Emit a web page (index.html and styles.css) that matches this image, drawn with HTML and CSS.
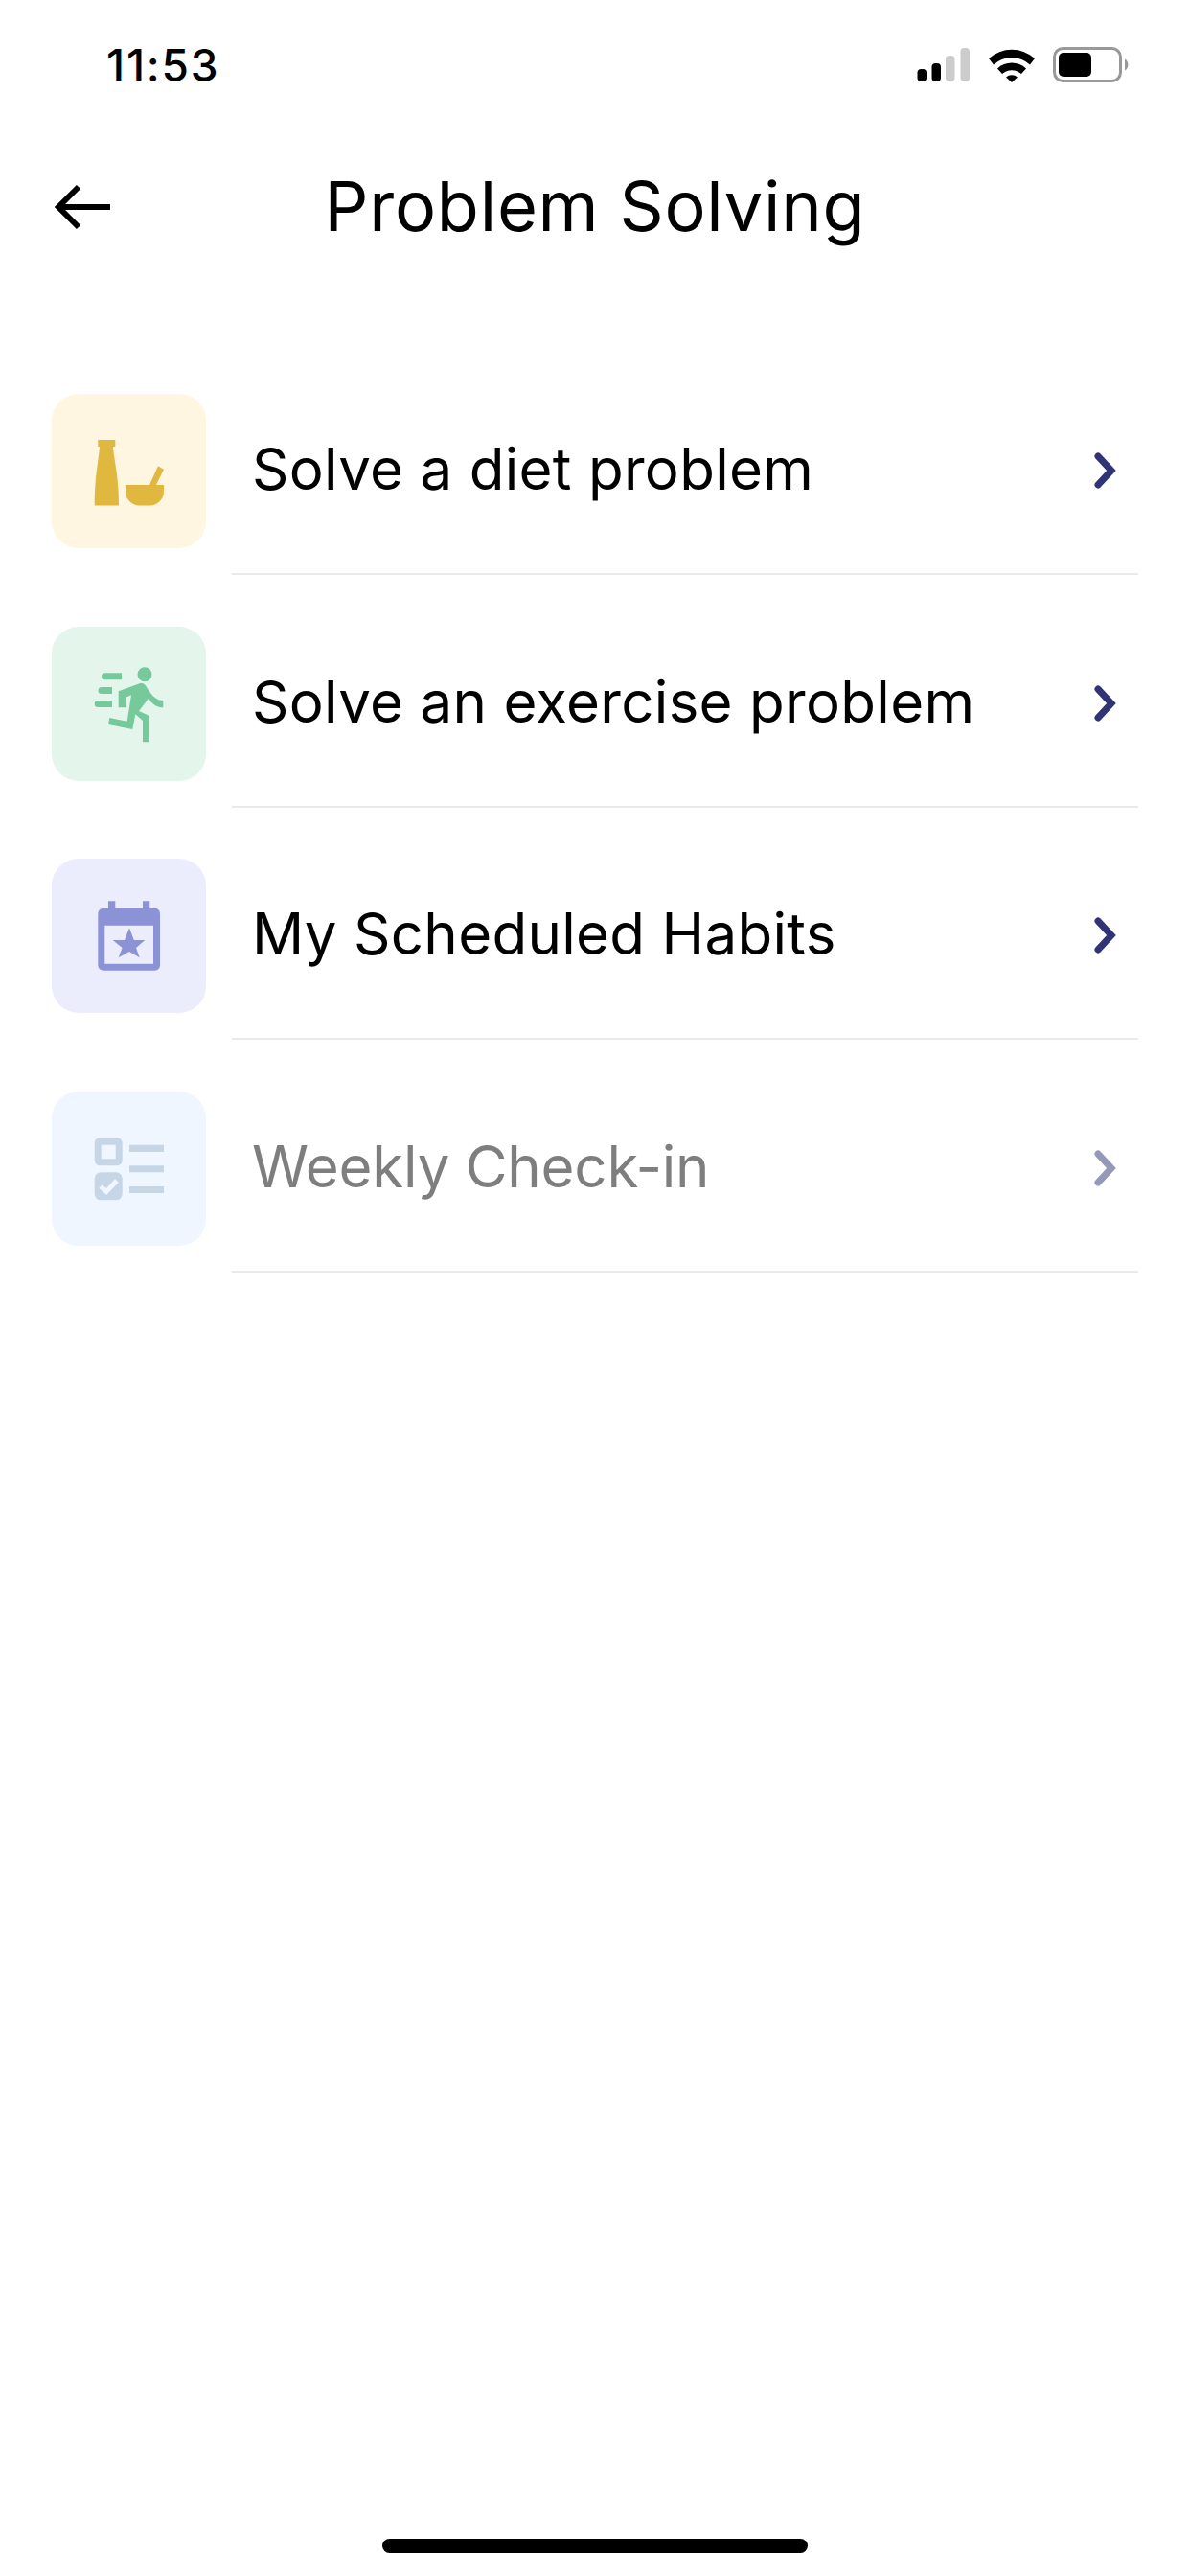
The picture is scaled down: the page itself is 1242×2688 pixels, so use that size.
FILE: index.html
```html
<!DOCTYPE html>
<html lang="en">
<head>
<meta charset="utf-8">
<title>Problem Solving</title>
<link rel="stylesheet" href="styles.css">
</head>
<body>
<div class="screen">
  <div class="status">
    <span class="time">11:53</span>
    <div class="status-icons">
      <svg class="signal" width="56" height="37" viewBox="0 0 56 37">
        <rect x="0.500" y="23" width="9.500" height="13" rx="4" fill="#000"/>
        <rect x="15.500" y="17" width="9.500" height="19" rx="4" fill="#000"/>
        <rect x="30" y="9" width="9.500" height="27" rx="4" fill="#ccc"/>
        <rect x="45.500" y="1" width="9.500" height="35" rx="4" fill="#ccc"/>
      </svg>
      <svg class="wifi" width="48" height="37" viewBox="0 0 48 37">
        <path d="M0 12 A36 36 0 0 1 48 12 L43 18.500 A28 28 0 0 0 5 18.500 Z" fill="#000"/>
        <path d="M9 22.500 A22 22 0 0 1 39 22.500 L34 28 A15 15 0 0 0 14 28 Z" fill="#000"/>
        <path d="M18 31.500 A9 9 0 0 1 30 31.500 L24 37 Z" fill="#000"/>
      </svg>
      <svg class="battery" width="80" height="38" viewBox="0 0 80 38">
        <rect x="1.500" y="1.500" width="69" height="34" rx="9" fill="none" stroke="#999" stroke-width="3"/>
        <rect x="6" y="6" width="34" height="25" rx="5" fill="#000"/>
        <path d="M75 12.500 A7 7 0 0 1 75 24.500 Z" fill="#999"/>
      </svg>
    </div>
  </div>
  <header class="nav">
    <svg class="back" width="62" height="48" viewBox="0 0 62 48">
      <path d="M61 24 H8 M28 3 L7 24 L28 45" fill="none" stroke="#000" stroke-width="6"/>
    </svg>
    <h1 class="title">Problem Solving</h1>
  </header>
  <ul class="menu">
    <li class="row">
      <div class="tile tile-diet">
        <svg width="161" height="161" viewBox="0 0 161 161">
          <path d="M48.300 48 H66.300 V55 H64 C65 70 70 85 70 116.500 H44.700 C44.700 85 49 70 50 55 H48.300 Z" fill="#e0b73f"/>
          <path d="M77 95 H102 L111 75.300 L117 78.700 L109 95 H117 V102 C117 110 110 116.500 103 116.500 H91 C84 116.500 77 110 77 102 Z" fill="#e0b73f"/>
        </svg>
      </div>
      <div class="row-body">
        <span class="label">Solve a diet problem</span>
        <svg class="chev" width="26" height="38" viewBox="0 0 26 38"><path d="M5 4 L19 19 L5 34" fill="none" stroke="#2f3476" stroke-width="7" stroke-linecap="round"/></svg>
      </div>
    </li>
    <li class="row">
      <div class="tile tile-run">
        <svg width="161" height="161" viewBox="0 0 161 161">
          <circle cx="97" cy="49.700" r="7.500" fill="#75c99a"/>
          <path d="M69.700 67.300 L93 58.700 C96 58.700 98 61 100 64.700 C104 71 109 77 116.300 77 V84.300 C110 84.300 105 81 101 74.700 L91 88 L102 93 V120.300 H95 V98 L87.300 91.300 L84.300 107 L59 102 L60.300 95 L78.700 98.700 L83 71.300 L77 73.700 V84.300 H69.700 Z" fill="#75c99a"/>
          <path d="M55.500 48.300 H73 V55.300 H55.500 A3.500 3.500 0 0 1 55.500 48.300 Z" fill="#75c99a"/>
          <path d="M52 63 H63 V70 H52 A3.500 3.500 0 0 1 52 63 Z" fill="#75c99a"/>
          <path d="M48.200 77 H63 V84 H48.200 A3.500 3.500 0 0 1 48.200 77 Z" fill="#75c99a"/>
        </svg>
      </div>
      <div class="row-body">
        <span class="label">Solve an exercise problem</span>
        <svg class="chev" width="26" height="38" viewBox="0 0 26 38"><path d="M5 4 L19 19 L5 34" fill="none" stroke="#2f3476" stroke-width="7" stroke-linecap="round"/></svg>
      </div>
    </li>
    <li class="row">
      <div class="tile tile-cal">
        <svg width="161" height="161" viewBox="0 0 161 161">
          <path fill-rule="evenodd" d="M59 44.300 H66.300 V51.700 H95 V44.300 H102.300 V51.700 H107 C111 51.700 113 54 113 58 V110.500 C113 114.500 111 116.700 107 116.700 H54.500 C50.500 116.700 48.300 114.500 48.300 110.500 V58 C48.300 54 50.500 51.700 54.500 51.700 H59 Z M55.300 69.700 V109.700 H106 V69.700 Z" fill="#8b93d6"/>
          <path d="M81 72.300 L85.800 85 H97.300 L88 93 L91.700 103.300 L81 97 L69.700 103.300 L73.500 93 L63.700 85 H76 Z" fill="#8b93d6"/>
        </svg>
      </div>
      <div class="row-body">
        <span class="label">My Scheduled Habits</span>
        <svg class="chev" width="26" height="38" viewBox="0 0 26 38"><path d="M5 4 L19 19 L5 34" fill="none" stroke="#2f3476" stroke-width="7" stroke-linecap="round"/></svg>
      </div>
    </li>
    <li class="row row-off">
      <div class="tile tile-check">
        <svg width="161" height="161" viewBox="0 0 161 161">
          <path fill-rule="evenodd" d="M51 48.300 H67.500 C71.500 48.300 73.700 50.500 73.700 54.500 V71 C73.700 75 71.500 77.300 67.500 77.300 H51 C47 77.300 44.700 75 44.700 71 V54.500 C44.700 50.500 47 48.300 51 48.300 Z M51.700 55.700 V70.300 H66.700 V55.700 Z" fill="#c6d6e7"/>
          <rect x="44.700" y="84.300" width="29" height="29" rx="6.500" fill="#c6d6e7"/>
          <path d="M51 99 L57 104.500 L68 93" fill="none" stroke="#eff6ff" stroke-width="5"/>
          <rect x="81" y="55.700" width="36" height="7.300" fill="#c6d6e7"/>
          <rect x="81" y="77.300" width="36" height="7" fill="#c6d6e7"/>
          <rect x="81" y="99" width="36" height="7" fill="#c6d6e7"/>
        </svg>
      </div>
      <div class="row-body">
        <span class="label label-tight">Weekly Check-in</span>
        <svg class="chev" width="26" height="38" viewBox="0 0 26 38"><path d="M5 4 L19 19 L5 34" fill="none" stroke="#2f3476" stroke-width="7" stroke-linecap="round"/></svg>
      </div>
    </li>
  </ul>
  <div class="home-bar"></div>
</div>
</body>
</html>
```
FILE: styles.css
```css
* { box-sizing: border-box; }
html, body { margin: 0; padding: 0; background: #fff; }
.screen {
  display: flex;
  flex-direction: column;
  width: 1242px;
  height: 2688px;
  overflow: hidden;
  font-family: "Inter", "Liberation Sans", sans-serif;
  color: #000;
}
.status {
  height: 72px;
  padding: 44px 63px 0 111px;
  display: flex;
  justify-content: space-between;
  align-items: flex-start;
}
.time {
  font-size: 46px;
  font-weight: 500;
  line-height: 48px;
  letter-spacing: 1.8px;
}
.status-icons {
  display: flex;
  align-items: flex-start;
  gap: 19px;
  padding-top: 5px;
}
.nav {
  height: 150px;
  margin-top: 69px;
  display: grid;
  grid-template-columns: 1fr auto 1fr;
  align-items: center;
}
.back {
  justify-self: start;
  margin-left: 54px;
}
.title {
  margin: 0;
  padding-bottom: 3px;
  font-size: 72px;
  font-weight: 400;
  line-height: 90px;
  letter-spacing: 0.75px;
}
.menu {
  list-style: none;
  margin: 120px 0 0;
  padding: 0 0 0 54px;
}
.row {
  display: flex;
  align-items: flex-start;
  height: 242.67px;
}
.tile {
  flex: none;
  width: 161px;
  height: 161px;
  border-radius: 28px;
}
.tile svg { display: block; }
.tile-diet { background: #fff6e1; }
.tile-run { background: #e4f5ec; }
.tile-cal { background: #ecedfc; }
.tile-check { background: #eff6ff; }
.row-body {
  margin-left: 27px;
  width: 946px;
  height: 189px;
  padding: 0 22px;
  display: flex;
  align-items: flex-start;
  justify-content: space-between;
  border-bottom: 2px solid #eaeaea;
}
.label {
  font-size: 60px;
  line-height: 157px;
  letter-spacing: 0.3px;
  margin-left: -1px;
}
.label-tight { letter-spacing: -0.23px; }
.chev {
  margin-top: 61px;
  margin-right: -1px;
}
.row-off .label, .row-off .chev { opacity: 0.5; }
.home-bar {
  flex: none;
  align-self: center;
  width: 444px;
  height: 15px;
  margin-top: auto;
  margin-bottom: 24px;
  border-radius: 8px;
  background: #000;
}
```
